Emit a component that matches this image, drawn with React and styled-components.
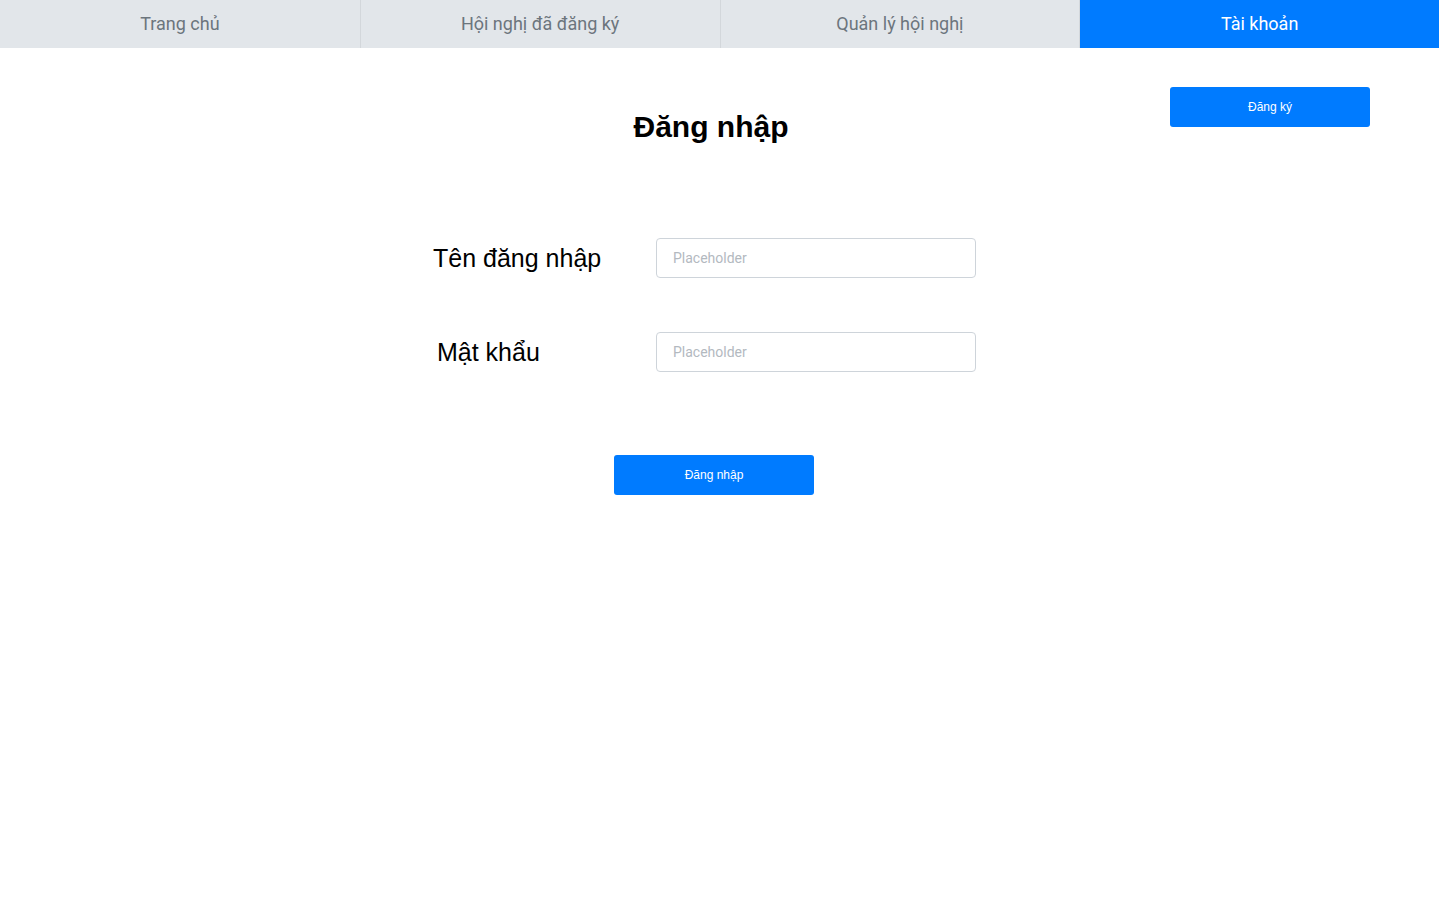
import React from "react";
import styled, { createGlobalStyle } from "styled-components";

const Global = createGlobalStyle`
  html, body { margin: 0; padding: 0; background: #fff; }
  body { font-family: "Liberation Sans", Arial, sans-serif; }
  * { box-sizing: border-box; }
`;

const Nav = styled.nav`
  display: grid;
  grid-template-columns: repeat(4, 1fr);
  width: 1439px;
  height: 48px;
  background: #e2e6ea;
`;

const Tab = styled.a`
  display: flex;
  align-items: center;
  justify-content: center;
  padding-bottom: 2px;
  font-family: Roboto, "Liberation Sans", sans-serif;
  font-size: 18px;
  color: ${(p) => (p.$active ? "#ffffff" : "#6c757d")};
  background: ${(p) => (p.$active ? "#007bff" : "transparent")};
  border-left: ${(p) => (p.$first ? "none" : "1px solid #d3d7db")};
  text-decoration: none;
  cursor: pointer;
`;

const Main = styled.main`
  display: flex;
  flex-direction: column;
`;

const Header = styled.div`
  display: grid;
  grid-template-columns: 1fr auto 1fr;
  align-items: start;
  padding-top: 39px;
`;

const Title = styled.h1`
  grid-column: 2;
  margin: 20px 0 0 -18px;
  font-size: 30px;
  font-weight: 700;
  color: #000;
  line-height: 40px;
`;

const RightSlot = styled.div`
  grid-column: 3;
  display: flex;
  justify-content: flex-end;
  padding-right: 70px;
`;

const Button = styled.button`
  width: 200px;
  height: 40px;
  border: none;
  border-radius: 3px;
  background: #007bff;
  color: #fff;
  font-family: "Liberation Sans", Arial, sans-serif;
  font-size: 12px;
  cursor: pointer;
`;

const Form = styled.form`
  display: flex;
  flex-direction: column;
  margin-top: 91px;
  margin-left: 433px;
  width: 543px;
  gap: 54px;
`;

const Row = styled.div`
  display: grid;
  grid-template-columns: 223px 320px;
  align-items: center;
`;

const Label = styled.label`
  font-size: 25px;
  color: #000;
  padding-left: ${(p) => p.$indent || 0}px;
`;

const Input = styled.input`
  height: 40px;
  width: 320px;
  border: 1px solid #ced4da;
  border-radius: 4px;
  padding: 0 16px;
  font-family: Roboto, "Liberation Sans", sans-serif;
  font-size: 14px;
  color: #495057;
  &::placeholder { color: #b3b9bf; }
`;

const Actions = styled.div`
  display: flex;
  justify-content: flex-start;
  margin-top: 83px;
  margin-left: 614px;
`;

export default function App() {
  return (
    <>
      <Global />
      <Nav>
        <Tab $first>Trang chủ</Tab>
        <Tab>Hội nghị đã đăng ký</Tab>
        <Tab>Quản lý hội nghị</Tab>
        <Tab $active>Tài khoản</Tab>
      </Nav>
      <Main>
        <Header>
          <Title>Đăng nhập</Title>
          <RightSlot>
            <Button type="button">Đăng ký</Button>
          </RightSlot>
        </Header>
        <Form onSubmit={(e) => e.preventDefault()}>
          <Row>
            <Label>Tên đăng nhập</Label>
            <Input placeholder="Placeholder" />
          </Row>
          <Row>
            <Label $indent={4}>Mật khẩu</Label>
            <Input type="password" placeholder="Placeholder" />
          </Row>
        </Form>
        <Actions>
          <Button type="button">Đăng nhập</Button>
        </Actions>
      </Main>
    </>
  );
}
